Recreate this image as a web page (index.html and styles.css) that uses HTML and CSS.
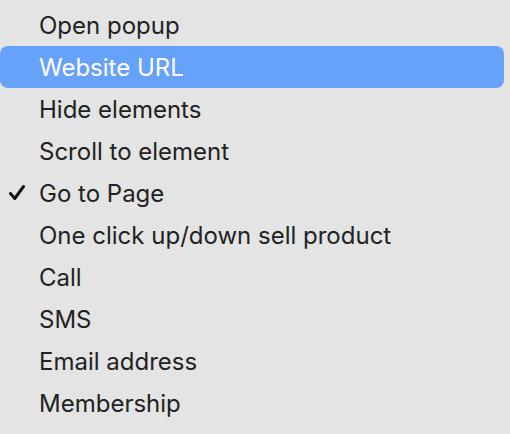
FILE: index.html
```html
<!DOCTYPE html>
<html lang="en">
<head>
    <meta charset="UTF-8">
    <title>Link action menu</title>
    <link rel="stylesheet" href="styles.css">
</head>
<body>
    <ul class="menu">
        <li class="menu-item">Open popup</li>
        <li class="menu-item selected">Website URL</li>
        <li class="menu-item">Hide elements</li>
        <li class="menu-item">Scroll to element</li>
        <li class="menu-item checked">
            <svg class="check" width="18" height="17" viewBox="0 0 18 17">
                <path d="M2.5 9.5 L6.8 14.5 L15.5 2.5" fill="none" stroke="#111111" stroke-width="3" stroke-linecap="round" stroke-linejoin="round"/>
            </svg>
            Go to Page
        </li>
        <li class="menu-item">One click up/down sell product</li>
        <li class="menu-item">Call</li>
        <li class="menu-item">SMS</li>
        <li class="menu-item">Email address</li>
        <li class="menu-item">Membership</li>
    </ul>
</body>
</html>
```

FILE: styles.css
```css
* {
    margin: 0;
    padding: 0;
    box-sizing: border-box;
}

body {
    font-family: Inter, "Liberation Sans", sans-serif;
    background: #e3e4e3;
    color: #222222;
    width: 510px;
    height: 434px;
    overflow: hidden;
}

.menu {
    list-style: none;
    padding: 4px 6px 0 0;
}

.menu-item {
    position: relative;
    height: 42px;
    display: flex;
    align-items: center;
    padding-left: 39px;
    font-size: 24px;
    border-radius: 8px;
}

.menu-item.selected {
    background: #66a1fa;
    color: #ffffff;
}

.check {
    position: absolute;
    left: 8px;
    top: 12px;
}
```
